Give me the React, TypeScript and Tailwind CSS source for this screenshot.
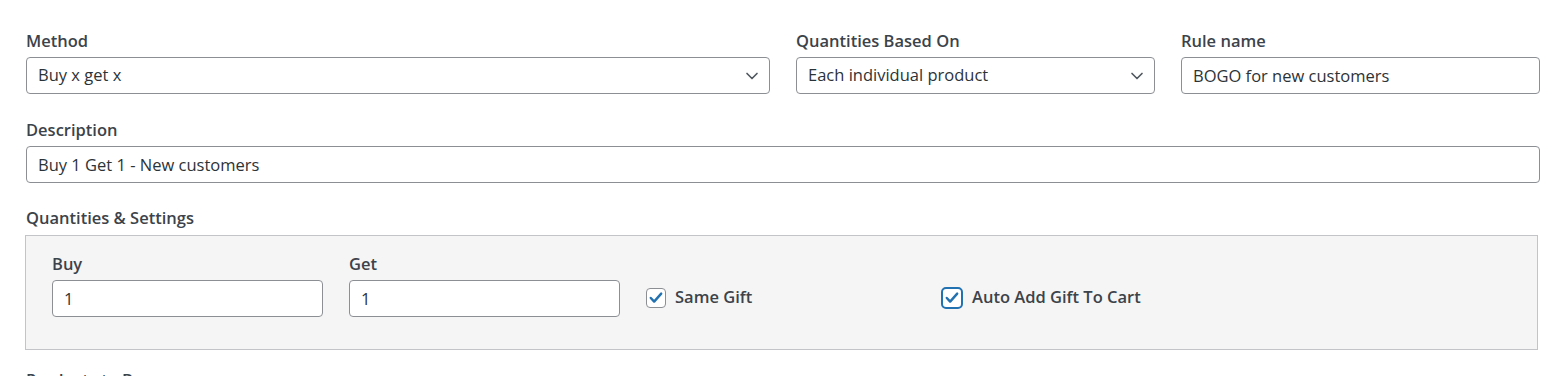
import { ChevronDown } from 'lucide-react';

const labelCls = 'block text-[16.5px] leading-5 font-semibold text-[#3c434a] mb-1.5';
const inputCls =
  'w-full h-[37px] px-[11px] rounded-[4px] border border-[#8c8f94] bg-white text-[16.5px] text-[#2c3338] outline-none';

function Field({ label, value, className = '' }: { label: string; value: string; className?: string }) {
  return (
    <div className={className}>
      <label className={labelCls}>{label}</label>
      <input className={inputCls} defaultValue={value} readOnly />
    </div>
  );
}

function SelectField({ label, value, className = '' }: { label: string; value: string; className?: string }) {
  return (
    <div className={className}>
      <label className={labelCls}>{label}</label>
      <div className="relative">
        <div className={`${inputCls} flex items-center`}>{value}</div>
        <ChevronDown
          className="absolute right-[8px] top-1/2 -translate-y-1/2 w-[20px] h-[20px] text-[#50575e]"
          strokeWidth={2}
        />
      </div>
    </div>
  );
}

function Check({ label, focused }: { label: string; focused?: boolean }) {
  return (
    <label className="flex items-center gap-[9px] h-[36px] pb-[3px]">
      <span
        className={
          focused
            ? 'w-[22px] h-[22px] rounded-[5px] border-2 border-[#2271b1] bg-white flex items-center justify-center'
            : 'w-[20px] h-[20px] rounded-[4px] border border-[#8c8f94] bg-white flex items-center justify-center'
        }
      >
        <svg viewBox="0 0 20 20" className="w-[16px] h-[16px]">
          <path d="M3.5 10l4.2 4.5L16.5 4.5" fill="none" stroke="#2271b1" strokeWidth="3" strokeLinecap="round" strokeLinejoin="round" />
        </svg>
      </span>
      <span className="text-[16.5px] font-semibold text-[#3c434a]">{label}</span>
    </label>
  );
}

export default function App() {
  return (
    <div className="min-h-screen bg-white pt-[31px] px-[26px] font-['Open_Sans',sans-serif]">
      <div className="grid grid-cols-4 gap-x-[26px] w-[1514px]">
        <SelectField label="Method" value="Buy x get x" className="col-span-2" />
        <SelectField label="Quantities Based On" value="Each individual product" />
        <Field label="Rule name" value="BOGO for new customers" />
      </div>

      <Field label="Description" value="Buy 1 Get 1 - New customers" className="w-[1514px] mt-[26px]" />

      <div className="mt-[25px]">
        <label className={`${labelCls} !mb-[7px]`}>Quantities &amp; Settings</label>
        <div className="w-[1513px] -ml-px border border-[#c3c4c7] bg-[#f5f5f5] pt-[18px] pb-[32px] px-[26px]">
          <div className="grid grid-cols-5 gap-x-[26px]">
            <div>
              <label className={labelCls}>Buy</label>
              <input className={`${inputCls} h-[36px]`} defaultValue="1" readOnly />
            </div>
            <div>
              <label className={labelCls}>Get</label>
              <input className={`${inputCls} h-[36px]`} defaultValue="1" readOnly />
            </div>
            <div className="flex items-end">
              <Check label="Same Gift" />
            </div>
            <div className="flex items-end -ml-[2px]">
              <Check label="Auto Add Gift To Cart" focused />
            </div>
          </div>
        </div>
      </div>

      <div className="mt-[20px]">
        <label className={labelCls}>Products to Buy</label>
      </div>
    </div>
  );
}
